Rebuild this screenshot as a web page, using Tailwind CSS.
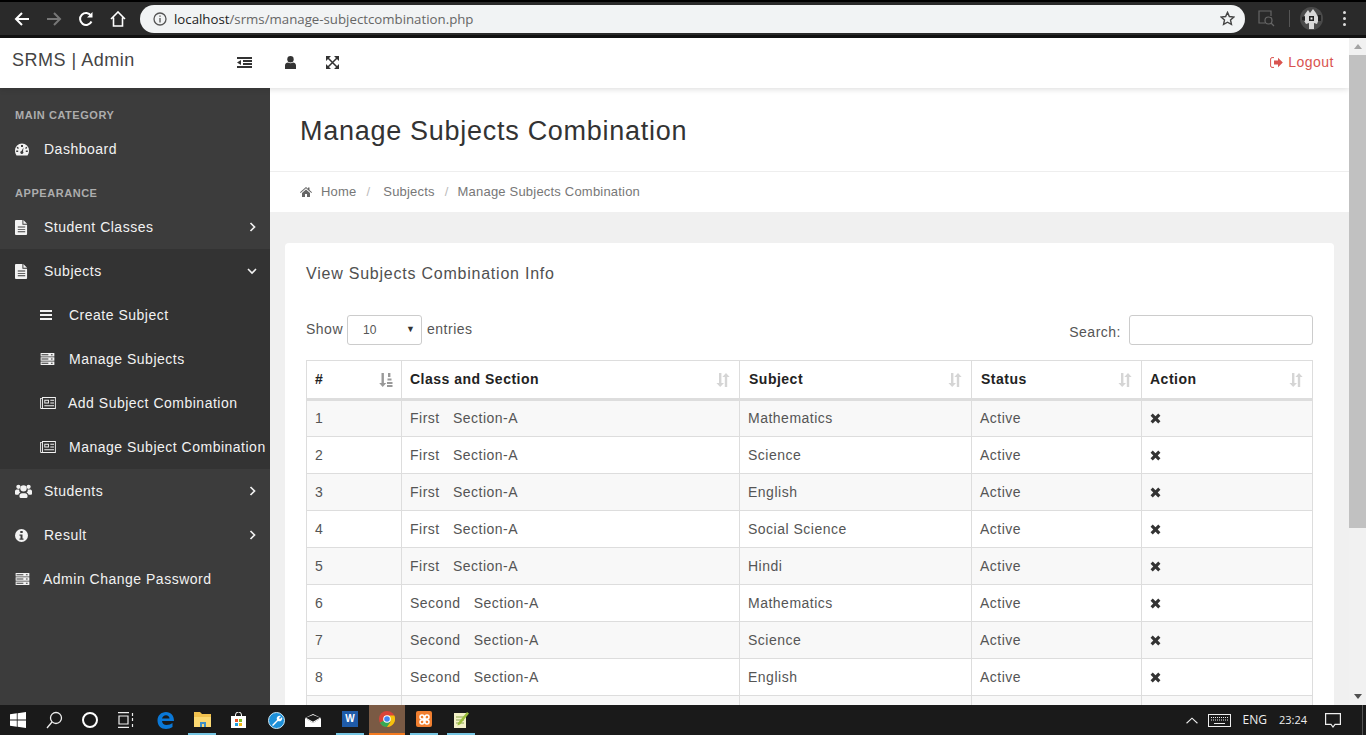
<!DOCTYPE html>
<html lang="en">
<head>
    <meta charset="UTF-8">
    <meta name="viewport" content="width=device-width, initial-scale=1.0">
    <title>Manage Subjects Combination</title>
    <script src="https://cdn.jsdelivr.net/npm/@tailwindcss/browser@4"></script>
</head>
<body class="h-[735px] overflow-hidden bg-white font-['Liberation_Sans',Arial,sans-serif]">
    <svg class="hidden">
        <symbol id="file" viewBox="0 0 14 16"><path fill-rule="evenodd" d="M1 0h7v5h5v10a1 1 0 0 1-1 1H1a1 1 0 0 1-1-1V1a1 1 0 0 1 1-1zM9 0l4 4H9zM3 7v1h8V7zM3 9.500v1h8v-1zM3 12v1h8v-1z"/></symbol>
        <symbol id="server" viewBox="0 0 16 14"><path fill-rule="evenodd" d="M0 0h16v4H0zM0 5h16v4H0zM0 10h16v4H0zM1 1.500v1h8v-1zM12 1.500v1h2v-1zM1 6.500v1h8v-1zM12 6.500v1h2v-1zM1 11.500v1h8v-1zM12 11.500v1h2v-1z"/></symbol>
        <symbol id="news" viewBox="0 0 17 13"><path fill-rule="evenodd" d="M0 1h2V0h15v13H1a1 1 0 0 1-1-1zM1 2v10h1V2zM3 1v11h13V1zM4.500 3h5v4h-5zM5.500 4v2h3V4zM11 3h4v1h-4zM11 6h4v1h-4zM4.500 9H15v1H4.500z"/></symbol>
        <symbol id="chev-r" viewBox="0 0 7 10"><path d="M1.500 1l4 4-4 4" fill="none" stroke="currentColor" stroke-width="1.700"/></symbol>
        <symbol id="sort" viewBox="0 0 14 14"><path d="M3 0h2.400v10H8L4.200 14 .4 10H3zM10 0l3.600 4H11.200v10H8.800V4H6.400z"/></symbol>
        <symbol id="times" viewBox="0 0 12 12"><path d="M3 .6L6 3.600 9 .6 11.400 3 8.400 6l3 3L9 11.400l-3-3-3 3L.6 9l3-3-3-3z"/></symbol>
    </svg>

    <div class="flex h-[735px] flex-col">
        <!-- browser toolbar -->
        <div class="flex h-[38px] shrink-0 items-center border-t-2 border-b-[3px] border-t-black border-b-[#111] bg-[#2a2a2a]">
            <svg class="ml-[14px] h-4 w-4 text-white" viewBox="0 0 16 16" fill="none" stroke="currentColor" stroke-width="2"><path d="M15 8H2M8 2L2 8l6 6"/></svg>
            <svg class="ml-4 h-4 w-4 text-[#777]" viewBox="0 0 16 16" fill="none" stroke="currentColor" stroke-width="2"><path d="M1 8h13M8 2l6 6-6 6"/></svg>
            <svg class="ml-4 h-4 w-4 text-white" viewBox="0 0 16 16" fill="none" stroke="currentColor" stroke-width="2"><path d="M13.500 10.500A6 6 0 1 1 13 4.500"/><path d="M14.500 1v5.500H9" fill="currentColor" stroke="none"/></svg>
            <svg class="ml-4 h-4 w-4 text-white" viewBox="0 0 16 16" fill="none" stroke="currentColor" stroke-width="1.600"><path d="M1 8l7-7 7 7M3.500 6.500V15h9V6.500"/></svg>
            <div class="ml-[14px] flex h-7 w-[1105px] items-center rounded-full bg-[#f1f3f4] pl-[13px] pr-[10px] font-['Open_Sans',sans-serif] text-[13.25px]">
                <svg class="h-[14px] w-[14px] text-[#555]" viewBox="0 0 14 14" fill="none" stroke="currentColor" stroke-width="1.300"><circle cx="7" cy="7" r="6"/><path d="M7 6v4.500M7 3.500v1.300"/></svg>
                <span class="ml-[7px] mt-[2px] text-[#222]">localhost</span><span class="mt-[2px] text-[#666]">/srms/manage-subjectcombination.php</span>
                <svg class="ml-auto h-[15px] w-[15px] text-[#444]" viewBox="0 0 16 16" fill="none" stroke="currentColor" stroke-width="1.500"><path d="M8 1.500l2 4.400 4.800.5-3.600 3.200 1 4.700L8 12l-4.200 2.300 1-4.700L1.200 6.400 6 5.900z"/></svg>
            </div>
            <svg class="ml-[13px] h-[17px] w-[17px] text-[#666]" viewBox="0 0 17 17" fill="none" stroke="currentColor" stroke-width="1.200"><path d="M7 13H1V1h12v5"/><circle cx="10.500" cy="10.500" r="3.500"/><path d="M13 13l3 3"/></svg>
            <div class="ml-[14px] h-[17px] w-px bg-[#555]"></div>
            <svg class="ml-[10px] h-[23px] w-[23px]" viewBox="0 0 23 23"><circle cx="11.500" cy="11.500" r="11.500" fill="#4a4a4a"/><path d="M5 7l3-4 2 3 3-4 3 4 3 6-2 5-3-1v6H9v-6l-3 1-3-5z" fill="#d8d8d8"/><path d="M9 9h5v5H9zM2 10l3-1v5l-3-1zM18 8h3v6h-3z" fill="#222"/><path d="M10.500 10.500h2v2h-2z" fill="#eee"/></svg>
            <div class="ml-[20px] flex flex-col gap-[3px]"><span class="h-[3px] w-[3px] rounded-full bg-[#ddd]"></span><span class="h-[3px] w-[3px] rounded-full bg-[#ddd]"></span><span class="h-[3px] w-[3px] rounded-full bg-[#ddd]"></span></div>
        </div>

        <!-- viewport -->
        <div class="flex min-h-0 flex-1">
            <div class="flex min-w-0 flex-1 flex-col overflow-hidden">
                <header class="relative z-10 flex h-[50px] shrink-0 items-center bg-white pb-[2px] pr-[15px] text-[#444] shadow-[0_1px_6px_rgba(0,0,0,0.15)]">
                    <div class="w-[237px] shrink-0 self-start pl-3 pt-[10px] text-[18px] leading-6 tracking-[0.5px] text-[#444]">SRMS | Admin</div>
                    <svg class="h-[11px] w-[15px] fill-[#333]" viewBox="0 0 15 11"><path d="M0 0h15v2H0zM6 3h9v2H6zM6 6h9v2H6zM0 9h15v2H0zM4 3v5L0 5.500z"/></svg>
                    <svg class="ml-[33px] h-[13px] w-[11px] fill-[#333]" viewBox="0 0 11 13"><circle cx="5.500" cy="3.200" r="3.200"/><path d="M0 13V9.500C0 7.500 1.500 6.500 3 6.500c1.500 1 3.500 1 5 0 1.500 0 3 1 3 3V13z"/></svg>
                    <svg class="ml-[30px] h-[13px] w-[13px] fill-[#333] stroke-[#333]" viewBox="0 0 13 13"><path d="M0 0h5L0 5zM13 0v5L8 0zM0 13V8l5 5zM13 13H8l5-5z" stroke="none"/><path d="M2 2l9 9M11 2l-9 9" stroke-width="1.500" fill="none"/></svg>
                    <a class="ml-auto flex items-center text-[14px] tracking-[0.5px] text-[#d9534f]">
                        <svg class="mr-[5px] h-[11px] w-[13px]" viewBox="0 0 13 11" fill="none" stroke="currentColor"><path d="M4 .6H2A1.500 1.500 0 0 0 .6 2v7A1.500 1.500 0 0 0 2 10.400h2"/><path d="M4 3.500h4V.8L12.800 5.500 8 10.200V7.500H4z" fill="currentColor" stroke="none"/></svg>
                        Logout
                    </a>
                </header>

                <div class="flex min-h-0 flex-1">
                    <!-- sidebar -->
                    <aside class="w-[270px] shrink-0 bg-[#3c3c3c] text-[14px] tracking-[0.5px] text-[#f2f2f2]">
                        <div class="flex h-[39px] items-end pb-[6px] pl-[15px] text-[11px] font-bold tracking-[0.55px] text-[#adadad]"><span class="leading-[11px]">MAIN CATEGORY</span></div>
                        <div class="flex h-[44px] items-center pl-[15px]">
                            <svg class="mr-[15px] h-[13px] w-[14px] fill-[#f2f2f2]" viewBox="0 0 14 13"><path fill-rule="evenodd" d="M7 .5a7 7 0 0 1 7 7c0 2-.5 3.500-1.500 5h-11C.5 11 0 9.500 0 7.500a7 7 0 0 1 7-7zM6 2v2h2V2zM2.500 3.800l-.9.9L3 6l1-1zM11.500 3.800L10 5l1 1 1.300-1.300zM1.200 7.500v1.500h2V7.500zM10.800 7.500v1.500h2V7.500zM8.500 4.500L6.500 8a1.500 1.500 0 1 0 1.500.5z"/></svg>
                            Dashboard
                        </div>
                        <div class="flex h-[34px] items-end pb-[6px] pl-[15px] text-[11px] font-bold tracking-[0.55px] text-[#adadad]"><span class="leading-[11px]">APPEARANCE</span></div>
                        <div class="flex h-[44px] items-center pl-[15px] pr-[14px]">
                            <svg class="mr-[16px] h-[15px] w-[13px] fill-[#f2f2f2]"><use href="#file"/></svg>
                            Student Classes
                            <svg class="ml-auto h-[10px] w-[7px]"><use href="#chev-r"/></svg>
                        </div>
                        <div class="bg-[#333333]">
                            <div class="flex h-[44px] items-center pl-[15px] pr-[13px]">
                                <svg class="mr-[16px] h-[15px] w-[13px] fill-[#f2f2f2]"><use href="#file"/></svg>
                                Subjects
                                <svg class="ml-auto h-[7px] w-[10px]" viewBox="0 0 10 7" fill="none" stroke="currentColor" stroke-width="1.600"><path d="M1 1l4 4 4-4"/></svg>
                            </div>
                            <div class="flex h-[44px] items-center pl-[40px]">
                                <svg class="mr-[17px] h-[10px] w-[12px] fill-[#f2f2f2]" viewBox="0 0 12 10"><path d="M0 0h12v2H0zM0 4h12v2H0zM0 8h12v2H0z"/></svg>
                                Create Subject
                            </div>
                            <div class="flex h-[44px] items-center pl-[40px]">
                                <svg class="mr-[14px] h-[12px] w-[15px] fill-[#f2f2f2]"><use href="#server"/></svg>
                                Manage Subjects
                            </div>
                            <div class="flex h-[44px] items-center pl-[40px]">
                                <svg class="mr-[12px] h-[12px] w-[16px] fill-[#f2f2f2]"><use href="#news"/></svg>
                                Add Subject Combination
                            </div>
                            <div class="flex h-[44px] items-center whitespace-nowrap pl-[40px]">
                                <svg class="mr-[13px] h-[12px] w-[16px] fill-[#f2f2f2]"><use href="#news"/></svg>
                                Manage Subject Combination
                            </div>
                        </div>
                        <div class="flex h-[44px] items-center pl-[15px] pr-[14px]">
                            <svg class="mr-[12px] h-[14px] w-[17px] fill-[#f2f2f2]" viewBox="0 0 16 13"><circle cx="3.200" cy="2.500" r="2"/><circle cx="12.800" cy="2.500" r="2"/><circle cx="8" cy="4" r="3"/><path d="M0 9V6.500C0 5.500 1 5 2 5h2c-.2 1.500.4 2.500 1.200 3.200C4 8.500 3.400 9 3.300 10H1a1 1 0 0 1-1-1zM16 9V6.500c0-1-1-1.500-2-1.500h-2c.2 1.500-.4 2.500-1.200 3.200 1.200.3 1.800.8 1.900 1.800H15a1 1 0 0 0 1-1zM4.200 11c0-1.500 1-2.500 2.300-2.500h3c1.300 0 2.300 1 2.300 2.500v1a1 1 0 0 1-1 1H5.200a1 1 0 0 1-1-1z"/></svg>
                            Students
                            <svg class="ml-auto h-[10px] w-[7px]"><use href="#chev-r"/></svg>
                        </div>
                        <div class="flex h-[44px] items-center pl-[15px] pr-[14px]">
                            <svg class="mr-[16px] h-[13px] w-[13px] fill-[#f2f2f2]" viewBox="0 0 13 13"><path fill-rule="evenodd" d="M6.500 0a6.500 6.500 0 1 1 0 13 6.500 6.500 0 0 1 0-13zM5.300 2v2h2.400V2zM4.500 5.500v1.300h1v2.700h-1v1.300h4V9.500h-1v-4z"/></svg>
                            Result
                            <svg class="ml-auto h-[10px] w-[7px]"><use href="#chev-r"/></svg>
                        </div>
                        <div class="flex h-[44px] items-center pl-[15px]">
                            <svg class="mr-[13px] h-[12px] w-[15px] fill-[#f2f2f2]"><use href="#server"/></svg>
                            Admin Change Password
                        </div>
                    </aside>

                    <!-- main content -->
                    <main class="min-w-0 flex-1 overflow-hidden bg-[#f0f0f0]">
                        <div class="flex h-[84px] items-center border-b border-[#eeeeee] bg-white pl-[30px] pt-[4px]">
                            <h1 class="text-[27px] leading-none tracking-[0.72px] text-[#333]">Manage Subjects Combination</h1>
                        </div>
                        <div class="flex h-[40px] items-center bg-white pl-[30px] text-[13px] tracking-[0.2px] text-[#777]">
                            <svg class="mr-[9px] h-[10px] w-[12px] fill-[#666]" viewBox="0 0 12 10"><path d="M6 0l2 1.700V.6h1.500V3L12 5.200l-.6.7L6 1.300.6 5.900 0 5.200zM2 6l4-3.400L10 6v4H7V7H5v3H2z"/></svg>
                            <span>Home</span><span class="ml-[10px] text-[#bbb]">/</span>
                            <span class="ml-[13px]">Subjects</span><span class="ml-[10px] text-[#bbb]">/</span>
                            <span class="ml-[9px]">Manage Subjects Combination</span>
                        </div>
                        <div class="px-[15px] pt-[31px]">
                            <section class="rounded-[4px] bg-white px-[21px] pt-[21px] pb-8">
                                <h2 class="text-[16px] leading-[19px] tracking-[0.77px] text-[#505050]">View Subjects Combination Info</h2>
                                <div class="mt-[32px] flex h-[33px] items-start justify-between text-[14px] tracking-[0.5px] text-[#555]">
                                    <div class="flex h-[29px] items-center">
                                        Show
                                        <div class="ml-1 mr-[5px] flex h-[30px] w-[75px] items-center justify-between rounded-[3px] border border-[#cccccc] pl-[15px] pr-[6px] text-[12px] tracking-normal">10<span class="text-[9px] text-[#333]">▼</span></div>
                                        entries
                                    </div>
                                    <div class="flex items-center">
                                        <span class="mt-[5px]">Search:</span>
                                        <div class="ml-2 h-[30px] w-[184px] rounded-[3px] border border-[#cccccc]"></div>
                                    </div>
                                </div>
                                <table class="mt-3 w-[1006px] table-fixed border-collapse text-[14px] tracking-[0.5px] text-[#555]">
                                    <colgroup>
                                        <col class="w-[95px]"><col class="w-[338px]"><col class="w-[232px]"><col class="w-[170px]"><col class="w-[171px]">
                                    </colgroup>
                                    <thead>
                                        <tr class="h-[39px] border-b-[3px] border-[#dddddd] text-left font-bold text-[#222]">
                                            <th class="border border-b-[3px] border-[#dddddd] px-2">
                                                <div class="flex items-center justify-between">#<svg class="h-[14px] w-[14px] fill-[#999]" viewBox="0 0 14 14"><path d="M2.500 0h2.400v10h2.400L3.700 14 .2 10h2.300zM9 0h2.400v4H9zM8.500 5.500h4v2h-4zM8 9h5.500v2H8zM8 12h5.500v2H8z"/></svg></div>
                                            </th>
                                            <th class="border border-b-[3px] border-[#dddddd] px-2"><div class="flex items-center justify-between pr-[1px]">Class and Section<svg class="h-[14px] w-[14px] fill-[#d5d5d5]"><use href="#sort"/></svg></div></th>
                                            <th class="border border-b-[3px] border-[#dddddd] pl-[9px] pr-2"><div class="flex items-center justify-between pr-[1px]">Subject<svg class="h-[14px] w-[14px] fill-[#d5d5d5]"><use href="#sort"/></svg></div></th>
                                            <th class="border border-b-[3px] border-[#dddddd] pl-[9px] pr-2"><div class="flex items-center justify-between pr-[1px]">Status<svg class="h-[14px] w-[14px] fill-[#d5d5d5]"><use href="#sort"/></svg></div></th>
                                            <th class="border border-b-[3px] border-[#dddddd] px-2"><div class="flex items-center justify-between pr-[1px]">Action<svg class="h-[14px] w-[14px] fill-[#d5d5d5]"><use href="#sort"/></svg></div></th>
                                        </tr>
                                    </thead>
                                    <tbody>
                                        <tr class="h-[37px] bg-[#f8f8f8]"><td class="border border-[#dddddd] px-2">1</td><td class="border border-[#dddddd] px-2 whitespace-pre">First   Section-A</td><td class="border border-[#dddddd] px-2">Mathematics</td><td class="border border-[#dddddd] px-2">Active</td><td class="border border-[#dddddd] px-2"><svg class="h-[11px] w-[11px] fill-[#333]"><use href="#times"/></svg></td></tr>
                                        <tr class="h-[37px]"><td class="border border-[#dddddd] px-2">2</td><td class="border border-[#dddddd] px-2 whitespace-pre">First   Section-A</td><td class="border border-[#dddddd] px-2">Science</td><td class="border border-[#dddddd] px-2">Active</td><td class="border border-[#dddddd] px-2"><svg class="h-[11px] w-[11px] fill-[#333]"><use href="#times"/></svg></td></tr>
                                        <tr class="h-[37px] bg-[#f8f8f8]"><td class="border border-[#dddddd] px-2">3</td><td class="border border-[#dddddd] px-2 whitespace-pre">First   Section-A</td><td class="border border-[#dddddd] px-2">English</td><td class="border border-[#dddddd] px-2">Active</td><td class="border border-[#dddddd] px-2"><svg class="h-[11px] w-[11px] fill-[#333]"><use href="#times"/></svg></td></tr>
                                        <tr class="h-[37px]"><td class="border border-[#dddddd] px-2">4</td><td class="border border-[#dddddd] px-2 whitespace-pre">First   Section-A</td><td class="border border-[#dddddd] px-2">Social Science</td><td class="border border-[#dddddd] px-2">Active</td><td class="border border-[#dddddd] px-2"><svg class="h-[11px] w-[11px] fill-[#333]"><use href="#times"/></svg></td></tr>
                                        <tr class="h-[37px] bg-[#f8f8f8]"><td class="border border-[#dddddd] px-2">5</td><td class="border border-[#dddddd] px-2 whitespace-pre">First   Section-A</td><td class="border border-[#dddddd] px-2">Hindi</td><td class="border border-[#dddddd] px-2">Active</td><td class="border border-[#dddddd] px-2"><svg class="h-[11px] w-[11px] fill-[#333]"><use href="#times"/></svg></td></tr>
                                        <tr class="h-[37px]"><td class="border border-[#dddddd] px-2">6</td><td class="border border-[#dddddd] px-2 whitespace-pre">Second   Section-A</td><td class="border border-[#dddddd] px-2">Mathematics</td><td class="border border-[#dddddd] px-2">Active</td><td class="border border-[#dddddd] px-2"><svg class="h-[11px] w-[11px] fill-[#333]"><use href="#times"/></svg></td></tr>
                                        <tr class="h-[37px] bg-[#f8f8f8]"><td class="border border-[#dddddd] px-2">7</td><td class="border border-[#dddddd] px-2 whitespace-pre">Second   Section-A</td><td class="border border-[#dddddd] px-2">Science</td><td class="border border-[#dddddd] px-2">Active</td><td class="border border-[#dddddd] px-2"><svg class="h-[11px] w-[11px] fill-[#333]"><use href="#times"/></svg></td></tr>
                                        <tr class="h-[37px]"><td class="border border-[#dddddd] px-2">8</td><td class="border border-[#dddddd] px-2 whitespace-pre">Second   Section-A</td><td class="border border-[#dddddd] px-2">English</td><td class="border border-[#dddddd] px-2">Active</td><td class="border border-[#dddddd] px-2"><svg class="h-[11px] w-[11px] fill-[#333]"><use href="#times"/></svg></td></tr>
                                        <tr class="h-[37px] bg-[#f8f8f8]"><td class="border border-[#dddddd]"></td><td class="border border-[#dddddd]"></td><td class="border border-[#dddddd]"></td><td class="border border-[#dddddd]"></td><td class="border border-[#dddddd]"></td></tr>
                                    </tbody>
                                </table>
                            </section>
                        </div>
                    </main>
                </div>
            </div>

            <!-- page scrollbar -->
            <div class="flex w-[17px] shrink-0 flex-col items-center bg-[#f1f1f1]">
                <div class="flex h-[17px] items-center"><span class="border-x-[4px] border-b-[5px] border-x-transparent border-b-[#a3a3a3]"></span></div>
                <div class="h-[473px] w-full bg-[#c1c1c1]"></div>
                <div class="mt-auto flex h-[17px] items-center"><span class="border-x-[4px] border-t-[5px] border-x-transparent border-t-[#505050]"></span></div>
            </div>
        </div>

        <!-- windows taskbar -->
        <div class="flex h-[30px] shrink-0 items-center bg-[#1a1a1a] text-white">
            <svg class="ml-[10px] h-[16px] w-[16px] fill-white" viewBox="0 0 16 16"><path d="M0 2.300L6.800 1.300V7.600H0zM7.600 1.200L16 0V7.600H7.600zM0 8.400H6.800V14.700L0 13.700zM7.600 8.400H16V16L7.600 14.800z"/></svg>
            <svg class="ml-[20px] h-[18px] w-[17px]" viewBox="0 0 17 18" fill="none" stroke="#eee" stroke-width="1.300"><circle cx="10" cy="7" r="5.500"/><path d="M6 11l-5 6"/></svg>
            <div class="ml-[19px] h-[16px] w-[16px] rounded-full border-2 border-white"></div>
            <svg class="ml-[20px] h-[16px] w-[17px]" viewBox="0 0 17 16" fill="none" stroke="#eee" stroke-width="1.200"><path d="M0 .6h11M0 15.400h11M1 4h9v8H1zM14.500 1v3M14.500 6v3M14.500 12v3"/></svg>
            <div class="ml-[13px] flex h-[30px] w-[34px] items-center justify-center">
                <svg class="h-[17px] w-[17px]" viewBox="0 0 17 17"><path d="M9 0c5 0 8 3.500 8 9H5c.3 2.500 2 4 4.500 4 2.500 0 4.500-.8 6-2v4c-1.800 1.200-4 2-6.500 2-5 0-8.500-3.500-8.500-8.500C.5 3.500 4.200 0 9 0zM5 6.500h7.500C12.500 4.500 11 3.200 9 3.200 7 3.200 5.500 4.500 5 6.500z" fill="#0a78d7"/></svg>
            </div>
            <div class="ml-[6px] flex h-[30px] w-[28px] items-center justify-center border-b-[2px] border-[#76c5e2]">
                <svg class="h-[15px] w-[17px]" viewBox="0 0 17 15"><path d="M0 0h6l2 2h9v13H0z" fill="#f1c14e"/><path d="M0 5h17v10H0z" fill="#fbd972"/><path d="M6 15v-5h6v5h-2v-3H8v3z" fill="#3e90c8"/></svg>
            </div>
            <div class="ml-[8px] flex h-[30px] w-[28px] items-center justify-center">
                <svg class="h-[16px] w-[15px]" viewBox="0 0 15 16"><path d="M0 4h15v12H0z" fill="#fff"/><path d="M4.500 5V3a3 3 0 0 1 6 0v2" fill="none" stroke="#fff"/><path d="M4 7h3v3H4z" fill="#e8562a"/><path d="M8 7h3v3H8z" fill="#80bb29"/><path d="M4 11h3v3H4z" fill="#1e9fe0"/><path d="M8 11h3v3H8z" fill="#f5b914"/></svg>
            </div>
            <div class="ml-[10px] flex h-[30px] w-[28px] items-center justify-center">
                <svg class="h-[17px] w-[17px]" viewBox="0 0 17 17"><circle cx="8.500" cy="8.500" r="8" fill="#1c8fd8" stroke="#cfe9f7"/><path d="M4 13l5-5a3 3 0 0 1 4-4l-2 2 1 1 2-2a3 3 0 0 1-4 4l-5 5z" fill="#fff"/></svg>
            </div>
            <div class="ml-[9px] flex h-[30px] w-[28px] items-center justify-center">
                <svg class="h-[13px] w-[16px]" viewBox="0 0 16 13"><path d="M0 4l8-4 8 4v9H0z" fill="#fff"/><path d="M0 4l8 5 8-5-8-3z" fill="#1a1a1a"/><path d="M1 3.800l7 4 7-4v1L8 9 1 4.800z" fill="#fff"/></svg>
            </div>
            <div class="ml-[9px] flex h-[30px] w-[28px] items-center justify-center border-b-[2px] border-[#76c5e2]">
                <div class="flex h-[16px] w-[16px] items-center justify-center bg-[#1f5ba8] text-[10px] font-bold leading-none text-white">W</div>
            </div>
            <div class="ml-[5px] flex h-[30px] w-[36px] items-center justify-center border-b-[2px] border-[#f47a1f] bg-[#7a5a44]">
                <svg class="h-[16px] w-[16px]" viewBox="0 0 16 16"><circle cx="8" cy="8" r="8" fill="#d9443a"/><path d="M8 8L.9 11.800A8 8 0 0 0 8 16l3.500-5z" fill="#37a853"/><path d="M8 4.500h7.300A8 8 0 0 1 8 16l3.500-5z" fill="#f4c20d"/><circle cx="8" cy="8" r="3.800" fill="#fff"/><circle cx="8" cy="8" r="2.800" fill="#4285f4"/></svg>
            </div>
            <div class="ml-[5px] flex h-[30px] w-[28px] items-center justify-center border-b-[2px] border-[#76c5e2]">
                <div class="flex h-[16px] w-[16px] items-center justify-center rounded-[2px] bg-[#f07f30]">
                    <svg class="h-[11px] w-[11px]" viewBox="0 0 11 11" fill="none" stroke="#fff" stroke-width="1.500"><path d="M3 1a2 2 0 0 0 0 4h5a2 2 0 1 0-2-2v5a2 2 0 1 0 2-2H3a2 2 0 1 0 2 2V3a2 2 0 0 0-2-2z"/></svg>
                </div>
            </div>
            <div class="ml-[9px] flex h-[30px] w-[28px] items-center justify-center border-b-[2px] border-[#76c5e2]">
                <svg class="h-[17px] w-[17px]" viewBox="0 0 17 17"><path d="M1 2h12v15H1z" fill="#f3f0c7"/><path d="M3 6h8M3 9h8M3 12h8" stroke="#8aa84a"/><path d="M5 12l9-11 2 1.500-9 11-2.500 1z" fill="#9bbd3c"/></svg>
            </div>

            <div class="ml-auto mr-[3px] flex items-center text-[12px] text-[#eee]">
                <svg class="h-[7px] w-[12px]" viewBox="0 0 13 7" fill="none" stroke="#eee" stroke-width="1.200"><path d="M.6 6.500l5.900-5.500 5.900 5.500"/></svg>
                <svg class="ml-[10px] h-[13px] w-[23px]" viewBox="0 0 23 13" fill="none" stroke="#eee"><rect x=".5" y=".5" width="22" height="12"/><path d="M3 3.500h17M3 6h17" stroke-dasharray="1 1"/><path d="M6 9.500h11"/></svg>
                <span class="ml-[12px] font-['Open_Sans',sans-serif]">ENG</span>
                <span class="ml-[12px] font-['Open_Sans',sans-serif] text-[11px]">23:24</span>
                <svg class="ml-[18px] h-[15px] w-[16px]" viewBox="0 0 16 15" fill="none" stroke="#eee" stroke-width="1.200"><path d="M.6.600h14.800v10.800H10L8 14l-2-2.600H.6z"/></svg>
                <div class="ml-[21px] h-[30px] w-px bg-[#555]"></div>
            </div>
        </div>
    </div>
</body>
</html>
